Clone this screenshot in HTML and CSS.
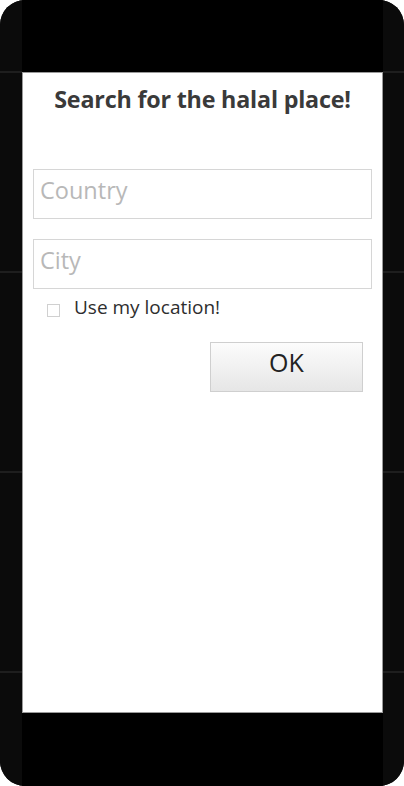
FILE: index.html
```html
<!DOCTYPE html>
<html>
<head>
<meta charset="utf-8">
<link rel="stylesheet" href="styles.css">
</head>
<body>
<div class="phone">
  <div class="side"></div>
  <div class="center">
    <div class="bezel"></div>
    <main class="screen">
      <h1 class="title">Search for the halal place!</h1>
      <div class="fields">
        <input class="field" type="text" placeholder="Country">
        <input class="field" type="text" placeholder="City">
      </div>
      <label class="check-row"><span class="box"></span><span class="check-label">Use my location!</span></label>
      <div class="actions"><button class="ok">OK</button></div>
    </main>
    <div class="bezel"></div>
  </div>
  <div class="side"></div>
</div>
</body>
</html>
```
FILE: styles.css
```css
html, body { margin: 0; padding: 0; background: #fff; }
body { font-family: "Open Sans", "Noto Sans", sans-serif; }
.phone {
  width: 404px; height: 786px; border-radius: 25px; overflow: hidden;
  display: grid; grid-template-columns: 22px 1fr 22px;
  background: #0b0b0b;
}
.side {
  background: repeating-linear-gradient(to bottom, #0b0b0b 0, #0b0b0b 71px, #1e1e1e 71px, #1e1e1e 73px, #0b0b0b 73px, #0b0b0b 200px);
}
.center { display: grid; grid-template-rows: 72px 641px 73px; background: #000; }
.bezel { background: #000; }
.screen {
  background: #fff; box-sizing: border-box; border: 1px solid #9a9a9a;
  display: flex; flex-direction: column; padding: 0 10px 0 10px;
}
.title {
  margin: 10px 0 0; text-align: center; font-size: 23.3px; font-weight: 700; color: #3a3a3a;
  letter-spacing: -0.2px; line-height: 32px;
}
.fields { display: flex; flex-direction: column; gap: 20px; margin-top: 54px; }
.field {
  box-sizing: border-box; height: 50px; width: 339px; border: 1px solid #d6d6d6;
  padding: 0 6px 8px; font-family: inherit; font-size: 23.5px; color: #333; outline: none; background: #fff;
}
.field::placeholder { color: #b8b8b8; }
.check-row { display: flex; align-items: center; gap: 14px; margin: 8px 0 0 14px; height: 20px; }
.box { width: 11px; height: 11px; border: 1px solid #d0d0d0; margin-top: 6px; }
.check-label { font-size: 19px; color: #2e2e2e; }
.actions { display: flex; justify-content: flex-end; margin-top: 25px; padding-right: 9px; }
.ok {
  width: 153px; height: 50px; box-sizing: border-box; border: 1px solid #cfcfcf;
  background: linear-gradient(#fcfcfc, #e6e6e6); font-family: inherit; font-size: 25px; color: #222;
  padding: 0 0 10px;
}
```
